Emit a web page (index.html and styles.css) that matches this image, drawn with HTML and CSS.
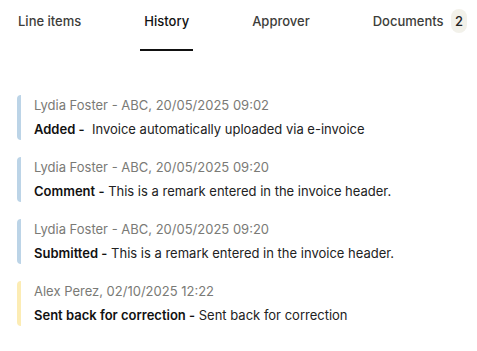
FILE: index.html
```html
<!DOCTYPE html>
<html lang="en">
<head>
  <meta charset="UTF-8" />
  <meta name="viewport" content="width=device-width, initial-scale=1.0"/>
  <title>Invoice | History</title>
  <link rel="stylesheet" href="styles.css">
</head>
<body>
  <nav class="tabs">
    <div class="tab tab-first">Line items</div>
    <div class="tab active">History</div>
    <div class="tab">Approver</div>
    <div class="tab">Documents <span class="badge">2</span></div>
  </nav>

  <div class="historico">
    <div class="evento">
      <div class="meta">Lydia Foster - ABC, 20/05/2025 09:02</div>
      <div class="texto"><strong>Added -</strong>&nbsp; Invoice automatically uploaded via e-invoice</div>
    </div>
    <div class="evento">
      <div class="meta">Lydia Foster - ABC, 20/05/2025 09:20</div>
      <div class="texto"><strong>Comment -</strong> This is a remark entered in the invoice header.</div>
    </div>
    <div class="evento">
      <div class="meta">Lydia Foster - ABC, 20/05/2025 09:20</div>
      <div class="texto"><strong>Submitted -</strong> This is a remark entered in the invoice header.</div>
    </div>
    <div class="evento alerta">
      <div class="meta">Alex Perez, 02/10/2025 12:22</div>
      <div class="texto"><strong>Sent back for correction -</strong> Sent back for correction</div>
    </div>
  </div>
</body>
</html>
```

FILE: styles.css
```css
body {
  margin: 0;
  padding: 0;
  background-color: white;
  color: #222;
  font-family: Inter, 'Noto Sans', sans-serif;
  font-size: 13px;
}

.tabs {
  display: flex;
  gap: 55px;
  padding-left: 14px;
}

.tab {
  height: 51px;
  box-sizing: border-box;
  padding: 12px 4px 0;
  line-height: 18px;
  font-weight: 500;
  color: #3d3d3a;
  border-bottom: 2px solid transparent;
  white-space: nowrap;
}

.tab.active {
  color: #111;
  border-bottom-color: #111;
}

.badge {
  display: inline-block;
  margin-left: 4px;
  margin-top: -3px;
  padding: 3px 4px;
  border-radius: 9px;
  background-color: #f2f1ea;
  color: #222;
  vertical-align: top;
}

.historico {
  margin-top: 44px;
  padding-left: 17px;
  display: flex;
  flex-direction: column;
  gap: 17px;
}

.evento {
  border-left: 4px solid #bcd4e7;
  border-radius: 4px;
  padding-left: 13px;
}

.evento.alerta {
  border-left-color: #fcecb4;
}

.meta {
  color: #7a7a76;
  line-height: 21px;
  margin-bottom: 3px;
}

.texto {
  line-height: 21px;
  color: #222;
}

.texto strong {
  font-weight: 600;
  color: #111;
}
```
